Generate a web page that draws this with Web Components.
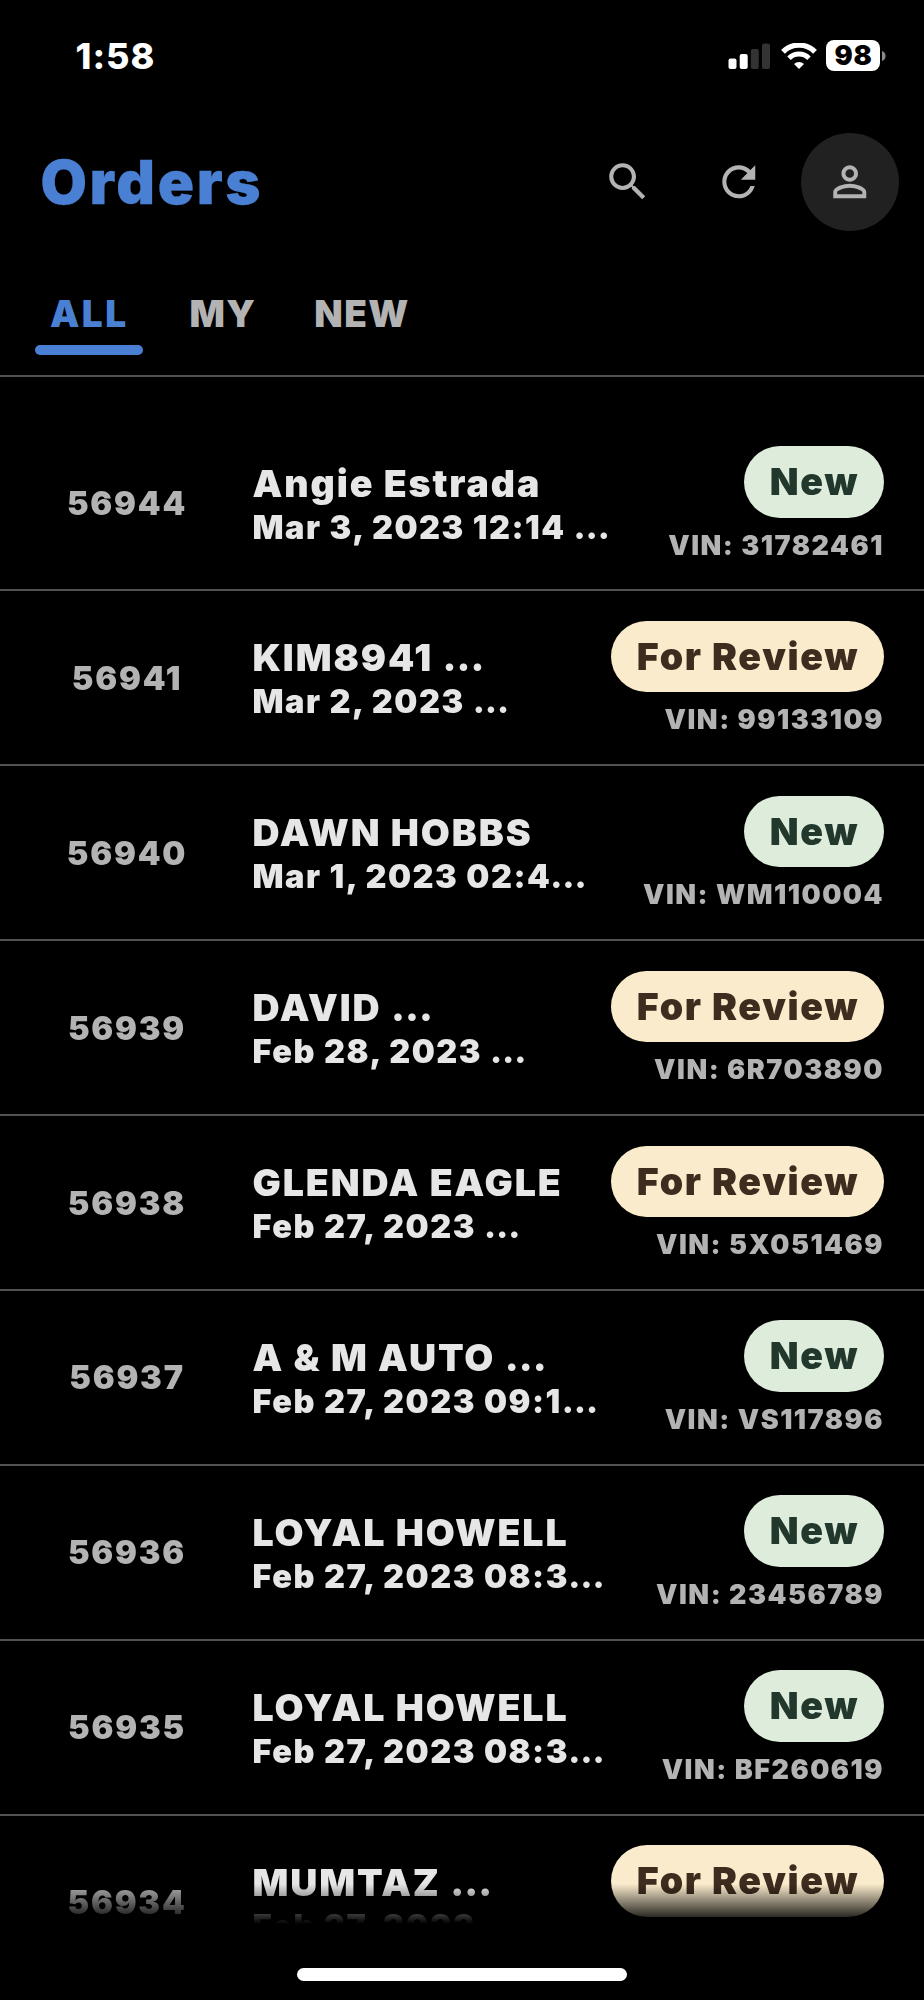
<!DOCTYPE html>
<html lang="en">
<head>
<meta charset="utf-8">
<title>Orders</title>
<style>
  body {
    margin: 0;
    background: #000;
    font-family: Inter, "Liberation Sans", sans-serif;
    font-weight: 900;
  }
</style>
</head>
<body>
<orders-app></orders-app>

<script>
class StatusBar extends HTMLElement {
  constructor() {
    super();
    this.attachShadow({ mode: "open" });
    this.shadowRoot.innerHTML = `
      <style>
        :host {
          display: flex;
          justify-content: space-between;
          align-items: center;
          height: 111px;
          box-sizing: border-box;
          padding: 0 38px 0 75.5px;
          color: #fff;
        }
        .time {
          font-size: 36px;
          font-weight: 800;
          line-height: 40px;
          letter-spacing: 1px;
        }
        .icons {
          display: flex;
          align-items: center;
        }
        .wifi { margin: 0 9px 0 10px; }
        .battery {
          width: 54px;
          height: 31px;
          border-radius: 8px;
          background: #fff;
          color: #000;
          font-size: 27px;
          line-height: 31px;
          letter-spacing: 0.8px;
          text-indent: 1px;
          text-align: center;
        }
        .nub { margin-left: 2px; }
        svg { display: block; }
      </style>
      <span class="time">1:58</span>
      <div class="icons">
        <svg width="43" height="26" viewBox="0 0 43 26" fill="#fff">
          <rect x="0.5" y="15.5" width="8" height="10.5" rx="2"/>
          <rect x="11.7" y="11" width="8" height="15" rx="2"/>
          <rect x="22.8" y="6" width="8" height="20" rx="2" fill="#333"/>
          <rect x="34" y="0.5" width="8" height="25.5" rx="2" fill="#333"/>
        </svg>
        <svg class="wifi" width="36" height="26" viewBox="0 0 36 26" fill="none" stroke="#fff">
          <path d="M2 8.8a22.6 22.6 0 0 1 32 0" stroke-width="5.4"/>
          <path d="M8 15.2a14.3 14.3 0 0 1 20 0" stroke-width="5"/>
          <path d="M18 26l-5-5.1a7.2 7.2 0 0 1 10 0z" fill="#fff" stroke="none"/>
        </svg>
        <div class="battery">98</div>
        <svg class="nub" width="4" height="10" viewBox="0 0 4 10"><path d="M0 0c2.4.8 3.6 2.7 3.6 5S2.4 9.2 0 10z" fill="#8a8a8a"/></svg>
      </div>
    `;
  }
}
customElements.define("status-bar", StatusBar);


const ICONS = {
  search: "M15.5 14h-.79l-.28-.27C15.41 12.59 16 11.11 16 9.5 16 5.91 13.09 3 9.5 3S3 5.91 3 9.5 5.91 16 9.5 16c1.61 0 3.09-.59 4.23-1.57l.27.28v.79l5 4.99L20.49 19l-4.99-5zm-6 0C7.01 14 5 11.99 5 9.5S7.01 5 9.5 5 14 7.01 14 9.5 11.99 14 9.5 14z",
  refresh: "M17.65 6.35C16.2 4.9 14.21 4 12 4c-4.42 0-7.99 3.58-7.99 8s3.57 8 7.99 8c3.73 0 6.84-2.55 7.73-6h-2.08c-.82 2.33-3.04 4-5.65 4-3.31 0-6-2.69-6-6s2.69-6 6-6c1.66 0 3.14.69 4.22 1.78L13 11h7V4l-2.35 2.35z",
  person: "M12 5.9c1.16 0 2.1.94 2.1 2.1s-.94 2.1-2.1 2.1S9.9 9.16 9.9 8s.94-2.1 2.1-2.1m0 9c2.97 0 6.1 1.46 6.1 2.1v1.1H5.9V17c0-.64 3.13-2.1 6.1-2.1M12 4C9.79 4 8 5.79 8 8s1.79 4 4 4 4-1.79 4-4-1.79-4-4-4zm0 9c-2.67 0-8 1.34-8 4v3h16v-3c0-2.66-5.33-4-8-4z",
};

class IconButton extends HTMLElement {
  constructor() {
    super();
    this.attachShadow({ mode: "open" });
  }

  connectedCallback() {
    const path = ICONS[this.getAttribute("icon")];
    this.shadowRoot.innerHTML = `
      <style>
        :host {
          display: flex;
          align-items: center;
          justify-content: center;
          width: 98px;
          height: 98px;
          border-radius: 50%;
          color: #b3b3b3;
        }
        :host([filled]) { background: #212121; }
      </style>
      <svg width="49.5" height="49.5" viewBox="0 0 24 24" fill="currentColor"><path d="${path}"/></svg>
    `;
  }
}
customElements.define("icon-button", IconButton);


class AppHeader extends HTMLElement {
  constructor() {
    super();
    this.attachShadow({ mode: "open" });
    this.shadowRoot.innerHTML = `
      <style>
        :host {
          display: flex;
          justify-content: space-between;
          align-items: center;
          height: 142px;
          padding: 0 25px 0 40.5px;
        }
        h1 {
          margin: 0;
          color: #4a80d4;
          font-size: 60px;
          font-weight: 900;
          line-height: 71px;
          letter-spacing: 2.6px;
          -webkit-text-stroke: 0.3px #4a80d4;
        }
        .actions {
          display: flex;
          gap: 13px;
        }
      </style>
      <h1><slot></slot></h1>
      <div class="actions">
        <icon-button icon="search"></icon-button>
        <icon-button icon="refresh"></icon-button>
        <icon-button icon="person" filled></icon-button>
      </div>
    `;
  }
}
customElements.define("app-header", AppHeader);


class TabItem extends HTMLElement {
  constructor() {
    super();
    this.attachShadow({ mode: "open" });
    this.shadowRoot.innerHTML = `
      <style>
        :host {
          display: flex;
          flex-direction: column;
          color: #b3b3b3;
          font-size: 37px;
          line-height: 44px;
          letter-spacing: 1.4px;
        }
        .label { padding: 0 15px; }
        .bar {
          height: 10px;
          margin-top: 9px;
          border-radius: 5px;
        }
        :host([active]) {
          margin-right: 3px;
          color: #4a80d4;
          letter-spacing: 2.4px;
        }
        :host([active]) .bar { background: #4a80d4; }
      </style>
      <span class="label"><slot></slot></span>
      <div class="bar"></div>
    `;
  }
}
customElements.define("tab-item", TabItem);


class TabBar extends HTMLElement {
  constructor() {
    super();
    this.attachShadow({ mode: "open" });
    this.shadowRoot.innerHTML = `
      <style>
        :host {
          display: flex;
          gap: 28px;
          box-sizing: border-box;
          height: 124px;
          padding: 39px 35px 0;
          border-bottom: 2px solid #525252;
        }
      </style>
      <slot></slot>
    `;
  }
}
customElements.define("tab-bar", TabBar);


class StatusBadge extends HTMLElement {
  constructor() {
    super();
    this.attachShadow({ mode: "open" });
    this.shadowRoot.innerHTML = `
      <style>
        :host {
          display: block;
          height: 71.5px;
          padding: 0 25px 0 26px;
          border-radius: 36px;
          background: #deecdc;
          color: #22382c;
          font-size: 37.5px;
          line-height: 71px;
          letter-spacing: 1.7px;
          white-space: nowrap;
        }
        :host([kind="review"]) {
          background: #f9ebcc;
          color: #3e2c1e;
        }
      </style>
      <slot></slot>
    `;
  }
}
customElements.define("status-badge", StatusBadge);


class OrderRow extends HTMLElement {
  constructor() {
    super();
    this.attachShadow({ mode: "open" });
  }

  connectedCallback() {
    const status = this.getAttribute("status");
    const vin = this.getAttribute("vin");
    this.shadowRoot.innerHTML = `
      <style>
        :host {
          display: flex;
          box-sizing: border-box;
          height: 174.9px;
          padding-right: 40px;
          border-bottom: 2px solid #525252;
          white-space: nowrap;
        }
        .id {
          width: 254px;
          padding-top: 67.5px;
          color: #b3b3b3;
          font-size: 32.5px;
          line-height: 40px;
          letter-spacing: 1.8px;
          text-align: center;
        }
        .customer {
          flex: 1;
          min-width: 0;
          margin-left: -1.5px;
          padding-top: 44px;
          color: #e6e6e6;
        }
        .name {
          font-size: 37.5px;
          line-height: 46px;
          letter-spacing: 1.9px;
        }
        .date {
          margin-top: 1px;
          font-size: 32.5px;
          line-height: 40px;
          letter-spacing: 1.5px;
        }
        .status {
          display: flex;
          flex-direction: column;
          align-items: flex-end;
          padding-top: 29.5px;
        }
        .vin {
          margin-top: 12px;
          color: #b3b3b3;
          font-size: 27px;
          line-height: 32px;
          letter-spacing: 1.5px;
        }
      </style>
      <div class="id">${this.getAttribute("order")}</div>
      <div class="customer">
        <div class="name"><slot></slot></div>
        <div class="date">${this.getAttribute("date")}</div>
      </div>
      <div class="status">
        <status-badge kind="${status}">${status === "review" ? "For Review" : "New"}</status-badge>
        ${vin ? `<div class="vin">VIN: ${vin}</div>` : ""}
      </div>
    `;
  }
}
customElements.define("order-row", OrderRow);


class OrderList extends HTMLElement {
  constructor() {
    super();
    this.attachShadow({ mode: "open" });
    this.shadowRoot.innerHTML = `
      <style>
        :host {
          display: block;
          box-sizing: border-box;
          height: 1547px;
          padding-top: 39.5px;
          overflow: hidden;
          /* rows fade out above the home indicator */
          -webkit-mask-image: linear-gradient(#000 1507px, transparent 1547px);
          mask-image: linear-gradient(#000 1507px, transparent 1547px);
        }
      </style>
      <slot></slot>
    `;
  }
}
customElements.define("order-list", OrderList);


class OrdersApp extends HTMLElement {
  constructor() {
    super();
    this.attachShadow({ mode: "open" });
    this.shadowRoot.innerHTML = `
      <style>
        :host {
          display: flex;
          flex-direction: column;
          width: 924px;
          height: 2000px;
          overflow: hidden;
          background: #000;
        }
        status-bar, app-header, tab-bar, order-list { flex: none; }
        .home {
          width: 330px;
          height: 13px;
          margin: 44px auto 0;
          border-radius: 7px;
          background: #fff;
        }
      </style>
      <status-bar></status-bar>
      <app-header>Orders</app-header>
      <tab-bar>
        <tab-item active>ALL</tab-item>
        <tab-item>MY</tab-item>
        <tab-item>NEW</tab-item>
      </tab-bar>
      <order-list>
        <order-row order="56944" date="Mar 3, 2023 12:14 …" status="new" vin="31782461">Angie Estrada</order-row>
        <order-row order="56941" date="Mar 2, 2023 …" status="review" vin="99133109">KIM8941 …</order-row>
        <order-row order="56940" date="Mar 1, 2023 02:4…" status="new" vin="WM110004">DAWN HOBBS</order-row>
        <order-row order="56939" date="Feb 28, 2023 …" status="review" vin="6R703890">DAVID …</order-row>
        <order-row order="56938" date="Feb 27, 2023 …" status="review" vin="5X051469">GLENDA EAGLE</order-row>
        <order-row order="56937" date="Feb 27, 2023 09:1…" status="new" vin="VS117896">A &amp; M AUTO …</order-row>
        <order-row order="56936" date="Feb 27, 2023 08:3…" status="new" vin="23456789">LOYAL HOWELL</order-row>
        <order-row order="56935" date="Feb 27, 2023 08:3…" status="new" vin="BF260619">LOYAL HOWELL</order-row>
        <order-row order="56934" date="Feb 27, 2023 …" status="review">MUMTAZ …</order-row>
      </order-list>
      <div class="home"></div>
    `;
  }
}
customElements.define("orders-app", OrdersApp);
</script>
</body>
</html>
